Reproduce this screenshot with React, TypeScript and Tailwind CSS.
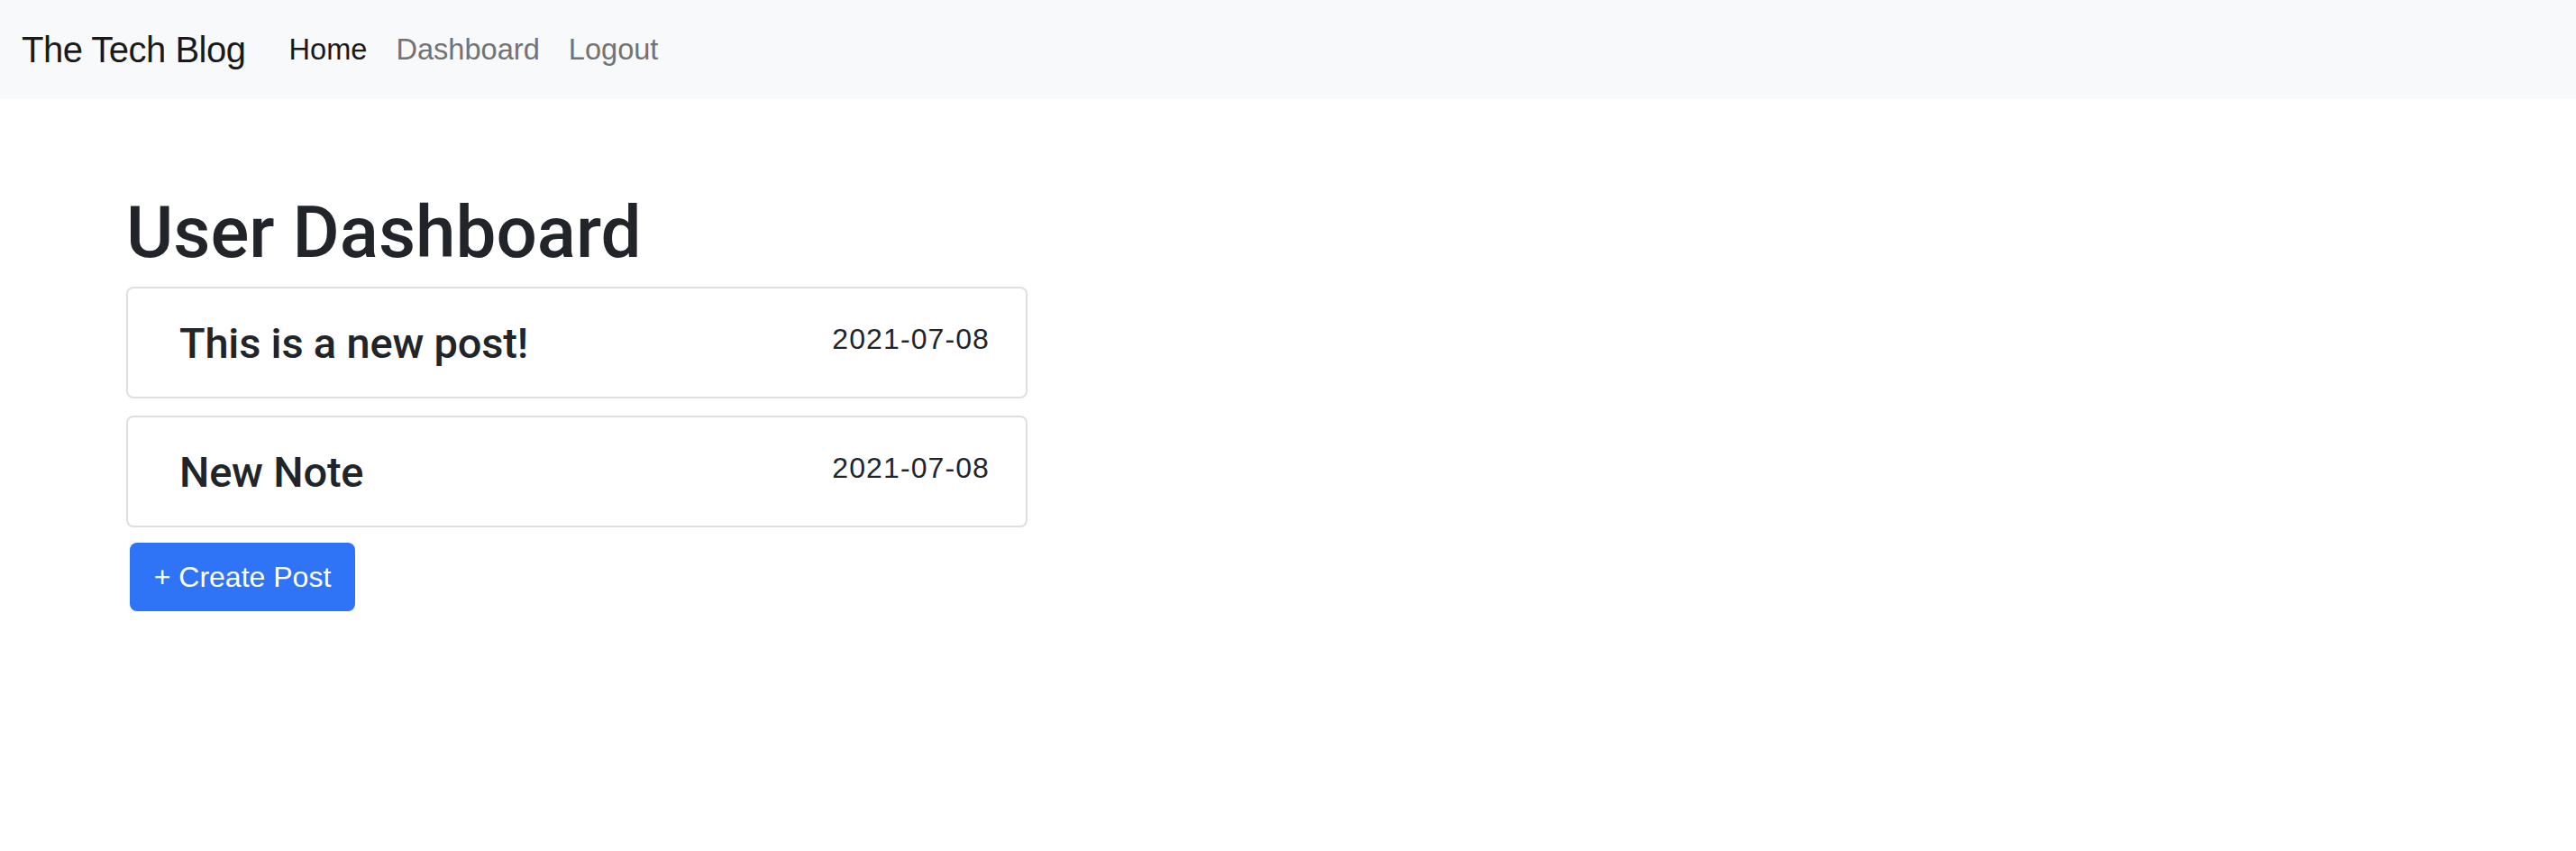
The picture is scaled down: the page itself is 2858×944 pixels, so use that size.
const posts = [
  { title: "This is a new post!", date: "2021-07-08" },
  { title: "New Note", date: "2021-07-08" },
];

function NavBar() {
  return (
    <nav className="flex h-[110px] items-center bg-[#f8f9fa] pl-[24px] font-['Liberation_Sans',Arial,sans-serif]">
      <a href="#" className="mr-[32px] text-[40px] leading-[60px] tracking-[-0.5px] text-[#1a1a1a]">
        The Tech Blog
      </a>
      <ul className="flex text-[32.6px] leading-[48px]">
        <li>
          <a href="#" className="px-[16px] text-[#1a1a1a]">Home</a>
        </li>
        <li>
          <a href="#" className="px-[16px] text-[#737373]">Dashboard</a>
        </li>
        <li>
          <a href="#" className="px-[16px] text-[#737373]">Logout</a>
        </li>
      </ul>
    </nav>
  );
}

function PostCard({ title, date }: { title: string; date: string }) {
  return (
    <div className="flex h-[124px] w-[1000px] items-start justify-between rounded-[8px] border-2 border-[#dfdfdf] pl-[57px] pr-[40px] pt-[32px]">
      <h4 className="font-['Roboto',sans-serif] text-[47px] font-medium leading-[57.6px] tracking-[-0.2px] text-[#212529]">
        {title}
      </h4>
      <span className="font-['Liberation_Sans',Arial,sans-serif] text-[32px] leading-[48px] tracking-[1.1px] text-[#212529]">
        {date}
      </span>
    </div>
  );
}

export default function App() {
  return (
    <div className="min-h-[944px] bg-white">
      <NavBar />
      <main className="pl-[140px] pt-[100px]">
        <h1 className="mb-[12px] font-['Roboto',sans-serif] text-[80px] font-medium leading-[96px] text-[#212529]">
          User Dashboard
        </h1>
        <div className="flex flex-col gap-[19px]">
          {posts.map((p) => (
            <PostCard key={p.title} title={p.title} date={p.date} />
          ))}
        </div>
        <button className="ml-[4px] mt-[17px] flex h-[76px] w-[250px] items-center justify-center rounded-[8px] bg-[#2f74f6] font-['Liberation_Sans',Arial,sans-serif] text-[32px] text-white">
          + Create Post
        </button>
      </main>
    </div>
  );
}
